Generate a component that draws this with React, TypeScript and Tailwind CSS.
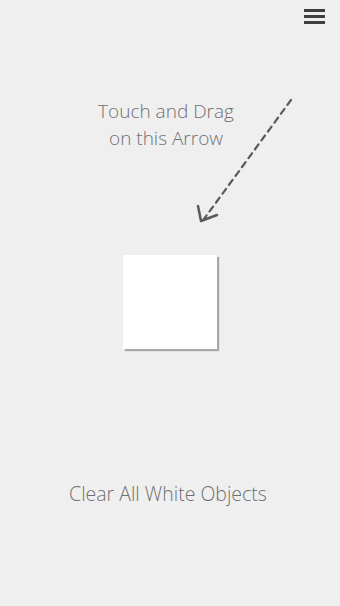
import React from "react";

const DragArrow = () => (
  <svg
    className="absolute left-[190px] top-[92px]"
    width="110"
    height="140"
    viewBox="0 0 110 140"
    fill="none"
  >
    {/* dashed shaft, page coords offset by (190, 92) */}
    <path
      d="M101 8 L14 127"
      stroke="#5a5a5a"
      strokeWidth="2.2"
      strokeDasharray="6 5"
      strokeLinecap="round"
    />
    <path
      d="M8 114 L11 129 L27 123"
      stroke="#5a5a5a"
      strokeWidth="2.5"
      strokeLinecap="round"
      strokeLinejoin="round"
    />
  </svg>
);

export default function App() {
  return (
    <div
      className="relative flex h-[606px] w-full flex-col items-center overflow-hidden bg-[#efefef] text-[#6f6f6f]"
      style={{ fontFamily: '"Open Sans", "Liberation Sans", sans-serif' }}
    >
      <div className="flex w-full justify-end pr-[15px] pt-[9px]">
        <button className="flex flex-col gap-[3px]" aria-label="menu">
          <span className="block h-[3px] w-[21px] bg-[#3f3f3f]"></span>
          <span className="block h-[3px] w-[21px] bg-[#3f3f3f]"></span>
          <span className="block h-[3px] w-[21px] bg-[#3f3f3f]"></span>
        </button>
      </div>

      <p className="mt-[74px] pr-[8px] text-center text-[19px] font-light leading-[27px]">
        Touch and Drag
        <br />
        on this Arrow
      </p>

      <div className="mt-[103px] h-[94px] w-[94px] bg-white shadow-[2px_2px_1px_rgba(0,0,0,0.3)]"></div>

      <p className="mt-[131px] pr-[4px] text-center text-[19.5px] font-light leading-[27px]">
        Clear All White Objects
      </p>

      <DragArrow />
    </div>
  );
}
